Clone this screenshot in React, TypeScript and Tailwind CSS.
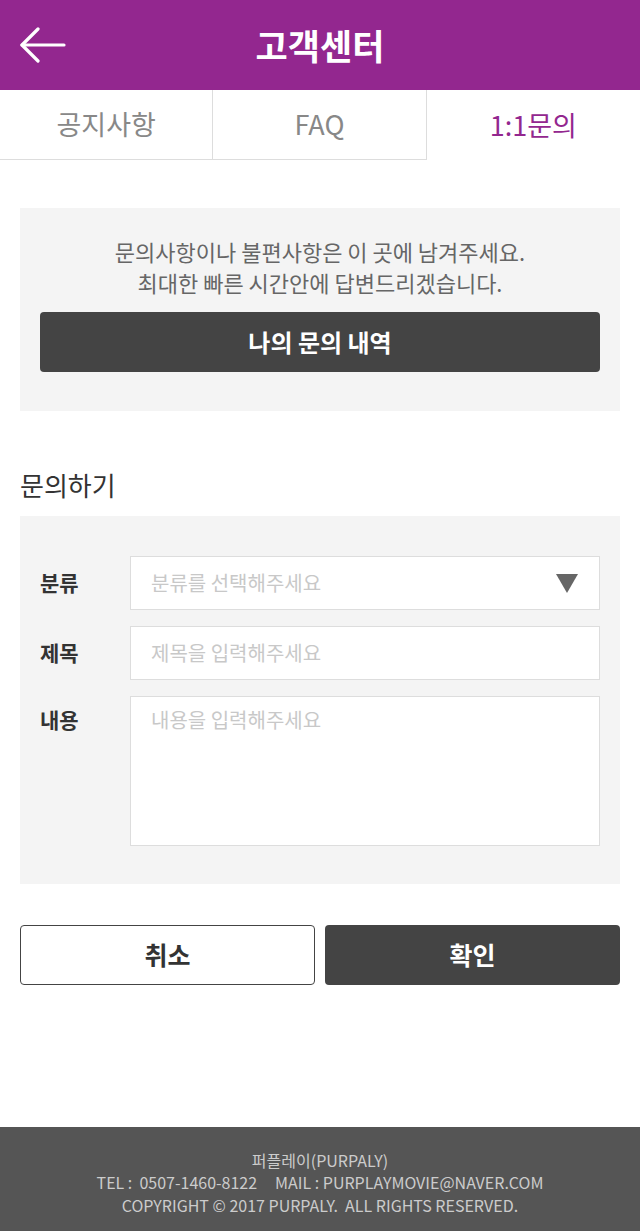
import { useState } from "react";

const FONT = { fontFamily: '"Noto Sans CJK KR", "Noto Sans", sans-serif' };

const TABS = ["공지사항", "FAQ", "1:1문의"];

function BackArrow() {
  return (
    <svg width="46" height="36" viewBox="0 0 46 36" fill="none" stroke="white" strokeWidth="3.2" strokeLinecap="round" strokeLinejoin="round">
      <path d="M2 18 H44" />
      <path d="M18 2 L2 18 L18 34" />
    </svg>
  );
}

function Field({ label, placeholder, tall, select }: { label: string; placeholder: string; tall?: boolean; select?: boolean }) {
  return (
    <div className="flex">
      <div className={`w-[90px] shrink-0 text-[21px] font-bold text-[#333] ${tall ? "pt-[8px]" : "flex h-[54px] items-center"}`}>
        {label}
      </div>
      {tall ? (
        <div className="h-[150px] flex-1 border border-[#dddddd] bg-white px-[20px] pt-[8px] text-[20px] text-[#c8c8c8]">
          {placeholder}
        </div>
      ) : (
        <div className="flex h-[54px] flex-1 items-center justify-between border border-[#dddddd] bg-white pl-[20px] pr-[21px] text-[20px] text-[#c8c8c8]">
          <span>{placeholder}</span>
          {select && (
            <svg width="22" height="19" viewBox="0 0 22 19">
              <path d="M0 0 H22 L11 19 Z" fill="#666666" />
            </svg>
          )}
        </div>
      )}
    </div>
  );
}

export default function App() {
  const [tab, setTab] = useState(2);

  return (
    <div className="flex min-h-[1231px] flex-col bg-white" style={FONT}>
      <header className="relative flex h-[90px] items-center justify-center bg-[#93278f]">
        <button className="absolute left-[20px] top-[27px]">
          <BackArrow />
        </button>
        <h1 className="text-[35px] font-bold text-white">고객센터</h1>
      </header>

      <nav className="grid h-[70px] grid-cols-3">
        {TABS.map((t, i) => (
          <button
            key={t}
            onClick={() => setTab(i)}
            className={`flex items-center justify-center text-[27px] ${
              i === tab ? "text-[#93278f]" : "border-b border-[#dddddd] text-[#888888]"
            } ${i < 2 ? "border-r border-r-[#dddddd]" : ""}`}
          >
            {t}
          </button>
        ))}
      </nav>

      <main className="px-[20px]">
        <section className="mt-[48px] bg-[#f4f4f4] px-[20px] pb-[39px] pt-[28px]">
          <p className="text-center text-[22px] leading-[31px] text-[#666666]">
            문의사항이나 불편사항은 이 곳에 남겨주세요.
            <br />
            최대한 빠른 시간안에 답변드리겠습니다.
          </p>
          <button className="mt-[14px] flex h-[60px] w-full items-center justify-center rounded-[4px] bg-[#444444] text-[24px] font-bold text-white">
            나의 문의 내역
          </button>
        </section>

        <h2 className="mt-[56px] text-[26px] leading-[36px] text-[#333333]">문의하기</h2>

        <section className="mt-[13px] flex flex-col gap-[16px] bg-[#f4f4f4] px-[20px] pb-[38px] pt-[40px]">
          <Field label="분류" placeholder="분류를 선택해주세요" select />
          <Field label="제목" placeholder="제목을 입력해주세요" />
          <Field label="내용" placeholder="내용을 입력해주세요" tall />
        </section>

        <div className="mt-[41px] grid grid-cols-2 gap-[10px]">
          <button className="flex h-[60px] items-center justify-center rounded-[4px] border border-[#444444] bg-white text-[25px] font-bold text-[#333333]">
            취소
          </button>
          <button className="flex h-[60px] items-center justify-center rounded-[4px] bg-[#444444] text-[25px] font-bold text-white">
            확인
          </button>
        </div>
      </main>

      <footer className="mt-auto bg-[#555555] pb-[15px] pt-[22px] text-center text-[16px] leading-[22.5px] text-[#cccccc]">
        <p>퍼플레이(PURPALY)</p>
        <p className="whitespace-pre">TEL :  0507-1460-8122     MAIL : PURPLAYMOVIE@NAVER.COM</p>
        <p className="whitespace-pre">COPYRIGHT © 2017 PURPALY.  ALL RIGHTS RESERVED.</p>
      </footer>
    </div>
  );
}
